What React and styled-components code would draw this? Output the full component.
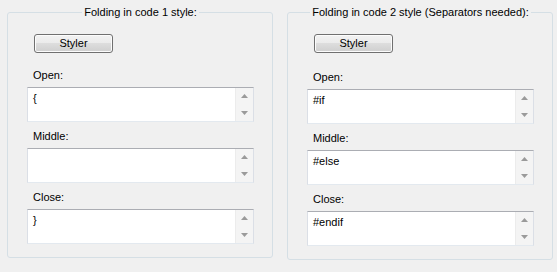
import React from "react";
import styled, { createGlobalStyle } from "styled-components";

const GlobalStyle = createGlobalStyle`
  html, body {
    margin: 0;
    padding: 0;
    background: #f0f0f0;
  }
  body {
    font-family: "Liberation Sans", Arial, sans-serif;
    font-size: 11px;
    color: #000;
  }
`;

const groups = [
  {
    title: "Folding in code 1 style:",
    open: "{",
    middle: "",
    close: "}",
    gap: 16,
  },
  {
    title: "Folding in code 2 style (Separators needed):",
    open: "#if",
    middle: "#else",
    close: "#endif",
    gap: 18,
  },
];

const App = () => {
  return (
    <>
      <GlobalStyle />
      <Page>
        {groups.map((g) => (
          <Group key={g.title}>
            <Title>{g.title}</Title>
            <StylerButton type="button" $gap={g.gap}>
              Styler
            </StylerButton>
            <FieldBlock label="Open:" value={g.open} />
            <FieldBlock label="Middle:" value={g.middle} />
            <FieldBlock label="Close:" value={g.close} last />
          </Group>
        ))}
      </Page>
    </>
  );
};

const FieldBlock = ({ label, value, last }) => (
  <>
    <Label>{label}</Label>
    <Field $last={last}>
      <FieldText>{value}</FieldText>
      <ScrollTrack>
        <ScrollButton>
          <svg width="7" height="4" viewBox="0 0 7 4">
            <polygon points="3.5,0 7,4 0,4" fill="#9a9a9a" />
          </svg>
        </ScrollButton>
        <ScrollButton>
          <svg width="7" height="4" viewBox="0 0 7 4">
            <polygon points="0,0 7,0 3.5,4" fill="#9a9a9a" />
          </svg>
        </ScrollButton>
      </ScrollTrack>
    </Field>
  </>
);

const Page = styled.div`
  display: flex;
  align-items: flex-start;
  gap: 14px;
  padding: 6px 0 0 7px;
  height: 272px;
  box-sizing: border-box;
`;

const Group = styled.fieldset`
  width: 266px;
  box-sizing: border-box;
  margin: 0;
  padding: 15px 18px 13px 19px;
  border: 1px solid #d5dfe5;
  border-radius: 3px;
  display: flex;
  flex-direction: column;
  align-items: stretch;
`;

const Title = styled.legend`
  margin: 0 auto;
  padding: 0 2px;
  line-height: 13px;
  height: 13px;
  white-space: nowrap;
`;

const StylerButton = styled.button`
  align-self: flex-start;
  margin: 0 0 ${(p) => p.$gap}px 7px;
  width: 79px;
  height: 19px;
  padding: 0;
  border: 1px solid #707070;
  border-radius: 3px;
  background: linear-gradient(
    to bottom,
    #f2f2f2 0%,
    #ebebeb 49%,
    #dddddd 50%,
    #cfcfcf 100%
  );
  box-shadow: inset 0 0 0 1px #fcfcfc;
  font-family: "Liberation Sans", Arial, sans-serif;
  font-size: 11px;
  color: #000;
  line-height: 17px;
`;

const Label = styled.div`
  padding-left: 6px;
  line-height: 13px;
  height: 13px;
  margin-bottom: 5px;
`;

const Field = styled.div`
  display: flex;
  height: 35px;
  box-sizing: border-box;
  margin-bottom: ${(p) => (p.$last ? 0 : 8)}px;
  background: #fff;
  border: 1px solid #dbdfe6;
  border-top-color: #abadb3;
  border-bottom-color: #e3e9ef;
`;

const FieldText = styled.div`
  flex: 1;
  padding: 4px 5px;
  line-height: 13px;
  white-space: pre;
`;

const ScrollTrack = styled.div`
  width: 17px;
  display: flex;
  flex-direction: column;
  background: #f4f4f4;
  border-left: 1px solid #ececec;
`;

const ScrollButton = styled.div`
  flex: 1;
  display: flex;
  align-items: center;
  justify-content: center;
  svg {
    display: block;
  }
`;

export default App;
